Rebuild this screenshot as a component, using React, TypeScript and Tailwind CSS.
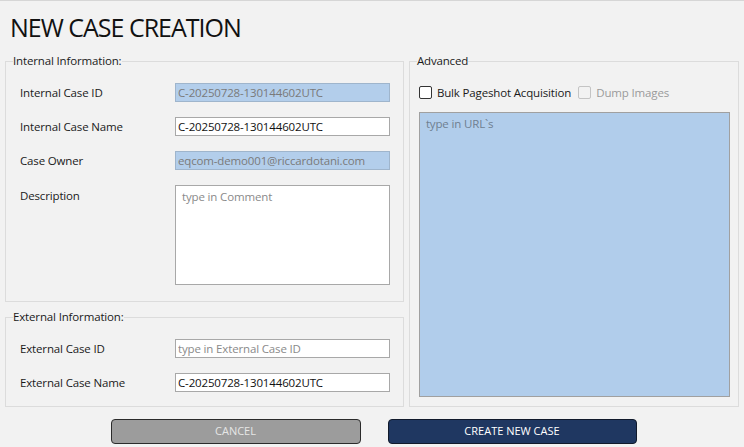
import React from 'react';

const font = { fontFamily: '"Segoe UI", "Open Sans", "Noto Sans", sans-serif' };

function Row({ label, children, top = false }: { label: string; children: React.ReactNode; top?: boolean }) {
  return (
    <div className={`flex ${top ? 'items-start' : 'items-center'}`}>
      <div className={`w-[169px] shrink-0 pl-[14px] text-[11.5px] tracking-[-0.15px] text-[#1a1a1a] ${top ? 'pt-[2px]' : ''}`}>{label}</div>
      {children}
    </div>
  );
}

export default function App() {
  const inputBase = 'h-[19px] w-[215px] border px-[2px] text-[11.5px] tracking-[-0.15px] outline-none leading-[17px]';

  return (
    <div style={font} className="h-[447px] w-[744px] overflow-hidden border-t border-[#d6d6d6] bg-[#f2f2f2]">
      <h1 className="pl-[10px] pt-[9px] text-[25px] leading-[34px] tracking-[-1px] text-[#111]">NEW CASE CREATION</h1>

      <div className="mt-[9px] flex gap-[5px] px-[5px]">
        {/* left column */}
        <div className="flex w-[400px] flex-col gap-[7px]">
          <fieldset className="border border-[#dcdcdc] pb-[16px] pt-[14px]">
            <legend className="ml-[7px] px-0 text-[11.5px] tracking-[-0.15px] leading-[16px] text-[#1a1a1a]">Internal Information:</legend>
            <div className="flex flex-col gap-[15px]">
              <Row label="Internal Case ID">
                <input readOnly value="C-20250728-130144602UTC" className={`${inputBase} border-[#9fb5cc] bg-[#b3ceeb] text-[#7a7a7a]`} />
              </Row>
              <Row label="Internal Case Name">
                <input readOnly value="C-20250728-130144602UTC" className={`${inputBase} border-[#a8a8a8] bg-white text-[#111]`} />
              </Row>
              <Row label="Case Owner">
                <input readOnly value="eqcom-demo001@riccardotani.com" className={`${inputBase} border-[#9fb5cc] bg-[#b3ceeb] text-[#7a7a7a]`} />
              </Row>
              <Row label="Description" top>
                <textarea
                  placeholder="type in Comment"
                  className="h-[100px] w-[215px] resize-none border border-[#a8a8a8] bg-white px-[6px] py-[3px] text-[11.5px] tracking-[-0.15px] leading-[16px] outline-none placeholder:text-[#8a8a8a]"
                />
              </Row>
            </div>
          </fieldset>

          <fieldset className="border border-[#dcdcdc] pb-[14px] pt-[14px]">
            <legend className="ml-[7px] px-0 text-[11.5px] tracking-[-0.15px] leading-[16px] text-[#1a1a1a]">External Information:</legend>
            <div className="flex flex-col gap-[15px]">
              <Row label="External Case ID">
                <input placeholder="type in External Case ID" className={`${inputBase} border-[#a8a8a8] bg-white text-[#111] placeholder:text-[#8a8a8a]`} />
              </Row>
              <Row label="External Case Name">
                <input readOnly value="C-20250728-130144602UTC" className={`${inputBase} border-[#a8a8a8] bg-white text-[#111]`} />
              </Row>
            </div>
          </fieldset>
        </div>

        {/* right column */}
        <fieldset className="flex h-[354px] w-[331px] flex-col border border-[#dcdcdc] px-[9px] pb-[8px] pr-[8px]">
          <legend className="-ml-[2px] px-0 text-[11.5px] tracking-[-0.15px] leading-[16px] text-[#1a1a1a]">Advanced</legend>
          <div className="mt-[15px] flex items-center text-[11.5px] tracking-[-0.15px]">
            <span className="h-[13px] w-[13px] rounded-[2px] border border-[#333] bg-white" />
            <span className="ml-[5px] text-[#1a1a1a]">Bulk Pageshot Acquisition</span>
            <span className="ml-[7px] h-[13px] w-[13px] rounded-[2px] border border-[#c4c4c4] bg-[#f2f2f2]" />
            <span className="ml-[5px] text-[#9a9a9a]">Dump Images</span>
          </div>
          <textarea
            placeholder="type in URL`s"
            className="mt-[11px] h-[285px] w-full resize-none border border-[#a0a0a0] bg-[#b1cdeb] px-[6px] py-[3px] text-[11.5px] tracking-[-0.15px] leading-[16px] outline-none placeholder:text-[#6f7f90]"
          />
        </fieldset>
      </div>

      <div className="mt-[12px] flex justify-center gap-[27px] pl-[3px]">
        <button className="h-[25px] w-[250px] rounded-[4px] border border-[#2b2b2b] bg-[#9c9c9c] text-[11px] text-[#e6e6e6]">CANCEL</button>
        <button className="h-[25px] w-[249px] rounded-[4px] border border-[#111a2b] bg-[#1f3761] text-[11px] text-white">CREATE NEW CASE</button>
      </div>
    </div>
  );
}
